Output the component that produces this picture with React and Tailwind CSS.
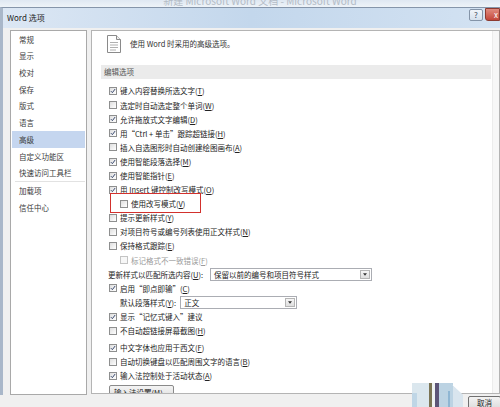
import React from "react";

const navItems = ["常规", "显示", "校对", "保存", "版式", "语言", "高级", "自定义功能区", "快速访问工具栏"];
const navItems2 = ["加载项", "信任中心"];

const Box = ({ checked, disabled }) => (
    <span
        className={`w-[8px] h-[8px] border flex items-center justify-center shrink-0 ${
            disabled ? "border-[#c4c4c4] bg-[#f7f7f7]" : "border-[#8e8f8f] bg-gradient-to-br from-[#dedede] to-white"
        }`}
    >
        {checked && (
            <svg viewBox="0 0 8 8" className="w-[6px] h-[6px]">
                <path d="M1.2 4.2 L3.2 6.2 L6.8 1.4" stroke="#34456b" strokeWidth="1.3" fill="none" />
            </svg>
        )}
    </span>
);

const Label = ({ text, k }) => (
    <span>
        {text}
        {k && (
            <>
                (<span className="underline">{k}</span>)
            </>
        )}
    </span>
);

const Row = ({ checked, text, k, indent, disabled }) => (
    <div
        className={`flex items-center shrink-0 h-[14.1px] gap-[3px] ${indent ? "pl-[28px]" : "pl-[17px]"} ${
            disabled ? "text-[#9a9a9a]" : ""
        }`}
    >
        <Box checked={checked} disabled={disabled} />
        <Label text={text} k={k} />
    </div>
);

const Select = ({ value, width }) => (
    <div className={`flex items-center h-[13px] border border-[#abadb3] bg-white ${width}`}>
        <span className="flex-1 pl-[3px] leading-none">{value}</span>
        <span className="w-[10px] h-[9px] mr-[1px] border border-[#b5b5b5] bg-gradient-to-b from-[#f6f6f6] to-[#dedede] flex items-center justify-center">
            <svg viewBox="0 0 6 4" className="w-[4px] h-[3px]">
                <path d="M0 0 H6 L3 4 Z" fill="#333" />
            </svg>
        </span>
    </div>
);

const App = () => {
    return (
        <div className="w-[500px] h-[407px] overflow-hidden relative flex flex-col bg-[#f0f0f0] text-[#222] font-['Noto_Sans_CJK_SC',sans-serif] text-[7.5px]">
            {/* window caption behind dialog */}
            <div className="h-[7px] shrink-0 overflow-hidden flex items-end justify-center bg-gradient-to-b from-[#dfe8f2] to-[#eef3f8]">
                <span className="text-[10px] leading-[12px] text-[#b4bcc6] pl-[20px]">新建 Microsoft Word 文档 - Microsoft Word</span>
            </div>

            {/* dialog title bar */}
            <div className="h-[21px] shrink-0 flex items-center border-t border-[#8595aa] border-l-[3px] border-l-[#a9b7c9] bg-gradient-to-r from-[#dce7f4] via-[#c3d7ec] to-[#d3e2f2]">
                <span className="pl-[4px] text-[8px] text-[#1c1c1c]">Word 选项</span>
                <div className="ml-auto flex items-start h-full">
                    <span className="mt-[1px] w-[14px] h-[12px] border border-[#8494a8] rounded-[2px] bg-gradient-to-b from-[#f1f5fa] to-[#d5e0ec] flex items-center justify-center text-[8px] text-[#3a4a5e]">?</span>
                    <span className="ml-[2px] w-[15px] h-[13px] border border-[#8c3a30] rounded-bl-[3px] bg-gradient-to-b from-[#e08a7e] to-[#c3453a] flex items-center justify-end pr-[1px] text-[8px] text-white">x</span>
                </div>
            </div>

            {/* body */}
            <div className="flex shrink-0 gap-[4px] pl-[7px] pt-[2px] border-l-[3px] border-[#a9b7c9]">
                {/* left nav */}
                <div className="w-[77px] h-[365px] shrink-0 border border-[#a9a9a9] bg-white text-[#3a3a3a]">
                    {navItems.map((n) => (
                        <div
                            key={n}
                            className={`h-[16.7px] flex items-center pl-[7px] mx-[1px] ${n === "高级" ? "bg-[#c5d6ef]" : ""}`}
                        >
                            {n}
                        </div>
                    ))}
                    <div className="h-[1px] bg-[#e2e2e2] ml-[4px] mr-[1px]" />
                    {navItems2.map((n) => (
                        <div key={n} className="h-[16.7px] flex items-center pl-[7px] mx-[1px]">
                            {n}
                        </div>
                    ))}
                </div>

                {/* right panel */}
                <div className="flex-1 h-[364px] border border-[#b4b4b4] bg-white flex overflow-hidden">
                    <div className="flex-1 flex flex-col relative">
                        <div className="h-[25px] shrink-0 flex items-center pl-[14px] gap-[8px]">
                            <svg viewBox="0 0 16 18" className="w-[16px] h-[18px]">
                                <path d="M1.5 0.5 H10.5 L14.5 4.5 V17.5 H1.5 Z" fill="#fff" stroke="#8a8a8a" />
                                <path d="M10.5 0.5 V4.5 H14.5" fill="#eee" stroke="#8a8a8a" />
                                <path d="M4 7.5 H12 M4 10 H12 M4 12.5 H12 M4 15 H10" stroke="#b0b0b0" />
                            </svg>
                            <span className="text-[#333]">使用 Word 时采用的高级选项。</span>
                        </div>

                        <div className="mt-[9px] ml-[9px] mr-[1px] h-[14px] shrink-0 bg-[#ebebeb] flex items-center pl-[3px] text-[#555]">
                            编辑选项
                        </div>

                        <div className="mt-[5px] shrink-0 flex flex-col">
                            <Row checked text="键入内容替换所选文字" k="T" />
                            <Row text="选定时自动选定整个单词" k="W" />
                            <Row checked text="允许拖放式文字编辑" k="D" />
                            <Row checked text="用“Ctrl + 单击”跟踪超链接" k="H" />
                            <Row text="插入自选图形时自动创建绘图画布" k="A" />
                            <Row checked text="使用智能段落选择" k="M" />
                            <Row checked text="使用智能指针" k="E" />
                            <Row checked text="用 Insert 键控制改写模式" k="O" />
                            <Row indent text="使用改写模式" k="V" />
                            <Row text="提示更新样式" k="Y" />
                            <Row text="对项目符号或编号列表使用正文样式" k="N" />
                            <Row text="保持格式跟踪" k="E" />
                            <Row indent disabled text="标记格式不一致错误" k="F" />
                            <div className="flex items-center shrink-0 h-[14.1px] pl-[16px] gap-[7px]">
                                <span>
                                    更新样式以匹配所选内容(<span className="underline">U</span>):
                                </span>
                                <Select value="保留以前的编号和项目符号样式" width="w-[162px]" />
                            </div>
                            <Row checked text="启用“即点即输”" k="C" />
                            <div className="flex items-center shrink-0 h-[14.1px] pl-[28px] gap-[4px]">
                                <span>
                                    默认段落样式(<span className="underline">Y</span>):
                                </span>
                                <Select value="正文" width="w-[117px]" />
                            </div>
                            <Row checked text="显示“记忆式键入”建议" />
                            <Row text="不自动超链接屏幕截图" k="H" />
                            <div className="h-[3px] shrink-0" />
                            <Row checked text="中文字体也应用于西文" k="F" />
                            <Row text="自动切换键盘以匹配周围文字的语言" k="B" />
                            <Row checked text="输入法控制处于活动状态" k="A" />
                            <div className="pl-[17px] mt-[2px] shrink-0">
                                <div className="w-[65px] h-[15px] border border-[#8a8a8a] rounded-[2px] bg-gradient-to-b from-[#f4f4f4] to-[#dcdcdc] flex items-center justify-center">
                                    输入法设置(<span className="underline">M</span>)...
                                </div>
                            </div>
                        </div>

                        {/* highlight box */}
                        <div className="absolute left-[18px] top-[162px] w-[91px] h-[20px] border-[1.5px] border-[#d2312d]" />
                    </div>
                    <div className="w-[7px] shrink-0 bg-[#f7f7f7] border-l border-[#ececec]" />
                </div>
            </div>

            {/* footer */}
            <div className="flex-1 flex justify-end items-start pt-[1px]">
                <div className="w-[33px] h-[14px] border border-[#707070] rounded-[2px] bg-gradient-to-b from-[#f3f3f3] to-[#dcdcdc] flex items-center justify-center -mr-[1px]">
                    取消
                </div>
            </div>

            {/* stray picture over bottom-right corner */}
            <svg viewBox="0 0 51 24" className="absolute left-[412px] top-[383px] w-[51px] h-[24px]">
                <path d="M0 0 H38 L51 12 V24 H0 Z" fill="#dbe7ee" />
                <rect x="0" y="10" width="5" height="14" fill="#bfd6e6" />
                <rect x="17" y="0" width="3" height="24" fill="#7b7454" />
                <rect x="20" y="0" width="3" height="24" fill="#eef2f2" />
                <rect x="23" y="0" width="4" height="24" fill="#5d5577" />
                <rect x="27" y="0" width="14" height="24" fill="#bcd3e3" />
                <path d="M38 0 L51 12 V24 H41 V3 Z" fill="#d9e5ee" />
                <rect x="36" y="8" width="2" height="16" fill="#8fb6d3" />
            </svg>
        </div>
    );
};

export default App;
